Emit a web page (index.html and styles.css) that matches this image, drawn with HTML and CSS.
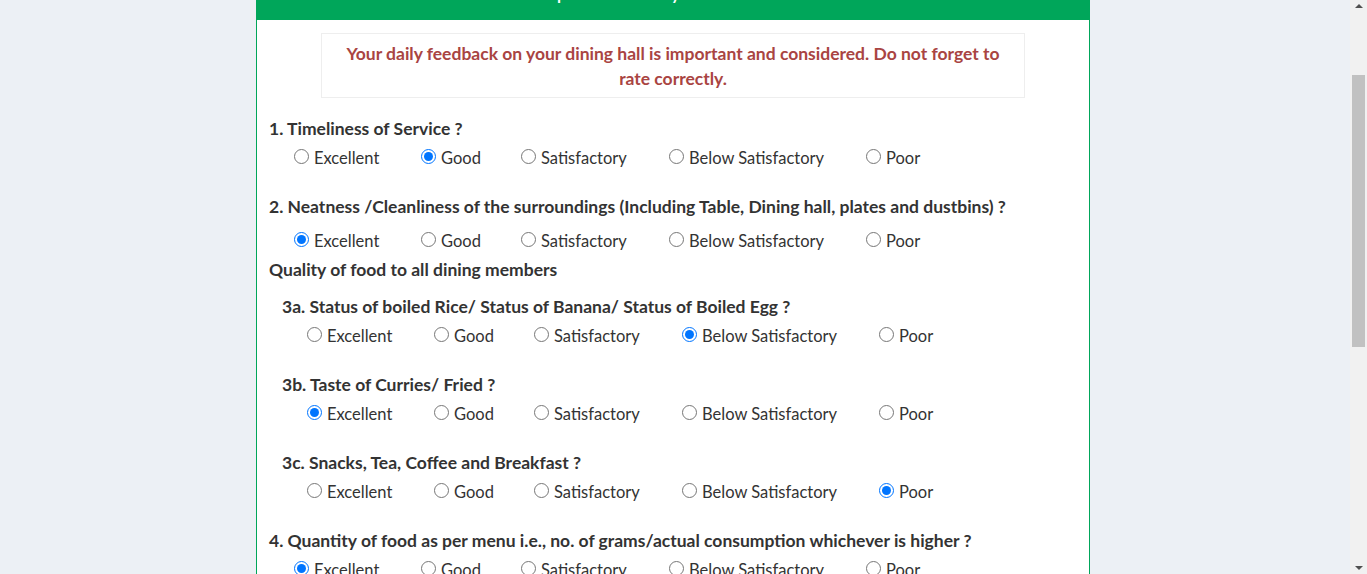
FILE: index.html
```html
<!DOCTYPE html>
<html lang="en">
<head>
<meta charset="utf-8">
<title>Dining Hall Feedback</title>
<link rel="stylesheet" href="styles.css">
</head>
<body>
<div class="page">
  <div class="card">
    <div class="card-header">Complaint Survey Feedback Form</div>
    <div class="card-body">
      <div class="notice">Your daily feedback on your dining hall is important and considered. Do not forget to rate correctly.</div>
      <form class="form">
        <div class="q">
          <div class="q-title">1. Timeliness of Service ?</div>
          <div class="options">
            <label class="opt"><input type="radio" name="q1"> Excellent</label>
            <label class="opt"><input type="radio" name="q1" checked> Good</label>
            <label class="opt"><input type="radio" name="q1"> Satisfactory</label>
            <label class="opt"><input type="radio" name="q1"> Below Satisfactory</label>
            <label class="opt"><input type="radio" name="q1"> Poor</label>
          </div>
        </div>
        <div class="q">
          <div class="q-title">2. Neatness /Cleanliness of the surroundings (Including Table, Dining hall, plates and dustbins) ?</div>
          <div class="options options-loose">
            <label class="opt"><input type="radio" name="q2" checked> Excellent</label>
            <label class="opt"><input type="radio" name="q2"> Good</label>
            <label class="opt"><input type="radio" name="q2"> Satisfactory</label>
            <label class="opt"><input type="radio" name="q2"> Below Satisfactory</label>
            <label class="opt"><input type="radio" name="q2"> Poor</label>
          </div>
        </div>
        <div class="section-title">Quality of food to all dining members</div>
        <div class="sub">
          <div class="q q-first">
            <div class="q-title">3a. Status of boiled Rice/ Status of Banana/ Status of Boiled Egg ?</div>
            <div class="options">
              <label class="opt"><input type="radio" name="q3a"> Excellent</label>
              <label class="opt"><input type="radio" name="q3a"> Good</label>
              <label class="opt"><input type="radio" name="q3a"> Satisfactory</label>
              <label class="opt"><input type="radio" name="q3a" checked> Below Satisfactory</label>
              <label class="opt"><input type="radio" name="q3a"> Poor</label>
            </div>
          </div>
          <div class="q">
            <div class="q-title">3b. Taste of Curries/ Fried ?</div>
            <div class="options">
              <label class="opt"><input type="radio" name="q3b" checked> Excellent</label>
              <label class="opt"><input type="radio" name="q3b"> Good</label>
              <label class="opt"><input type="radio" name="q3b"> Satisfactory</label>
              <label class="opt"><input type="radio" name="q3b"> Below Satisfactory</label>
              <label class="opt"><input type="radio" name="q3b"> Poor</label>
            </div>
          </div>
          <div class="q">
            <div class="q-title">3c. Snacks, Tea, Coffee and Breakfast ?</div>
            <div class="options">
              <label class="opt"><input type="radio" name="q3c"> Excellent</label>
              <label class="opt"><input type="radio" name="q3c"> Good</label>
              <label class="opt"><input type="radio" name="q3c"> Satisfactory</label>
              <label class="opt"><input type="radio" name="q3c"> Below Satisfactory</label>
              <label class="opt"><input type="radio" name="q3c" checked> Poor</label>
            </div>
          </div>
        </div>
        <div class="q">
          <div class="q-title">4. Quantity of food as per menu i.e., no. of grams/actual consumption whichever is higher ?</div>
          <div class="options">
            <label class="opt"><input type="radio" name="q4" checked> Excellent</label>
            <label class="opt"><input type="radio" name="q4"> Good</label>
            <label class="opt"><input type="radio" name="q4"> Satisfactory</label>
            <label class="opt"><input type="radio" name="q4"> Below Satisfactory</label>
            <label class="opt"><input type="radio" name="q4"> Poor</label>
          </div>
        </div>
        <div class="q">
          <div class="q-title">5. Courtesy of the staff ?</div>
          <div class="options">
            <label class="opt"><input type="radio" name="q5"> Excellent</label>
            <label class="opt"><input type="radio" name="q5"> Good</label>
            <label class="opt"><input type="radio" name="q5"> Satisfactory</label>
            <label class="opt"><input type="radio" name="q5"> Below Satisfactory</label>
            <label class="opt"><input type="radio" name="q5"> Poor</label>
          </div>
        </div>
        <div class="q">
          <div class="q-title">6. Comments / Suggestions</div>
          <textarea class="comments" rows="4"></textarea>
        </div>
        <div class="actions">
          <button type="button" class="btn">Submit</button>
        </div>
      </form>
    </div>
  </div>
</div>
<div class="scrollbar" aria-hidden="true">
  <div class="sb-arrow sb-up"></div>
  <div class="sb-track"><div class="sb-thumb"></div></div>
  <div class="sb-arrow sb-down"></div>
</div>
<script src="script.js"></script>
</body>
</html>
```
FILE: styles.css
```css
html, body {
  margin: 0;
  padding: 0;
}
html {
  scrollbar-width: none;
}
body {
  background: #ecf0f5;
  font-family: Lato, "Noto Sans", sans-serif;
  color: #333;
}
.page {
  width: 834px;
  margin-left: 256px;
  padding-top: 89px;
  min-height: 1245px;
  box-sizing: border-box;
}
.card {
  background: #fff;
  border: 1px solid #00a65a;
  border-top: 0;
}
.card-header {
  background: #00a65a;
  color: #fff;
  font-size: 22px;
  line-height: 34px;
  padding: 3px 0 12px;
  text-align: center;
  margin: 0 -1px;
}
.card-body {
  padding: 13px 12px 40px;
}
.notice {
  width: 704px;
  box-sizing: border-box;
  margin: 0 auto;
  border: 1px solid #eee;
  padding: 7px 10px 6px;
  text-align: center;
  color: #a94442;
  font-weight: 700;
  font-size: 17.5px;
  line-height: 25px;
}
.form {
  padding-top: 20px;
}
.q {
  margin-top: 28px;
}
.form > .q:first-child {
  margin-top: 0;
}
.q-title {
  font-weight: 700;
  font-size: 17.5px;
  line-height: 22px;
  color: #333;
}
.section-title {
  margin-top: 8px;
  font-weight: 700;
  font-size: 17.5px;
  line-height: 22px;
}
.sub {
  padding-left: 13px;
}
.sub .q-first {
  margin-top: 15px;
}
.options {
  margin-top: 4px;
  padding-left: 25px;
  display: grid;
  grid-template-columns: 127px 100px 148px 197px auto;
  height: 24px;
  align-items: center;
  font-size: 16.5px;
  line-height: 24px;
  color: #333;
}
.options-loose {
  margin-top: 9px;
}
.opt {
  display: flex;
  align-items: center;
  gap: 5px;
  white-space: nowrap;
  padding-top: 2px;
}
.opt input {
  margin: -3px 0 0 0;
  width: 15px;
  height: 15px;
}
.comments {
  display: block;
  margin-top: 6px;
  width: 100%;
  box-sizing: border-box;
  border: 1px solid #d2d6de;
}
.actions {
  margin-top: 20px;
  text-align: center;
}
.btn {
  background: #00a65a;
  border: 1px solid #008d4c;
  color: #fff;
  padding: 6px 20px;
  font-size: 15px;
  font-family: inherit;
}
.scrollbar {
  position: fixed;
  top: 0;
  right: 0;
  bottom: 0;
  width: 17px;
  background: #f1f1f1;
  display: flex;
  flex-direction: column;
}
.sb-arrow {
  height: 17px;
  display: flex;
  align-items: center;
  justify-content: center;
}
.sb-up::before,
.sb-down::before {
  content: "";
  width: 0;
  height: 0;
  border-left: 4px solid transparent;
  border-right: 4px solid transparent;
}
.sb-up::before {
  border-bottom: 4px solid #505050;
  margin-top: -5px;
}
.sb-down::before {
  border-top: 4px solid #505050;
  margin-top: 5px;
}
.sb-track {
  flex: 1;
  padding: 0 2px;
}
.sb-thumb {
  margin-top: 58px;
  height: 272px;
  background: #c1c1c1;
}
```
FILE: script.js
```js
window.scrollTo(0, 118);
```
